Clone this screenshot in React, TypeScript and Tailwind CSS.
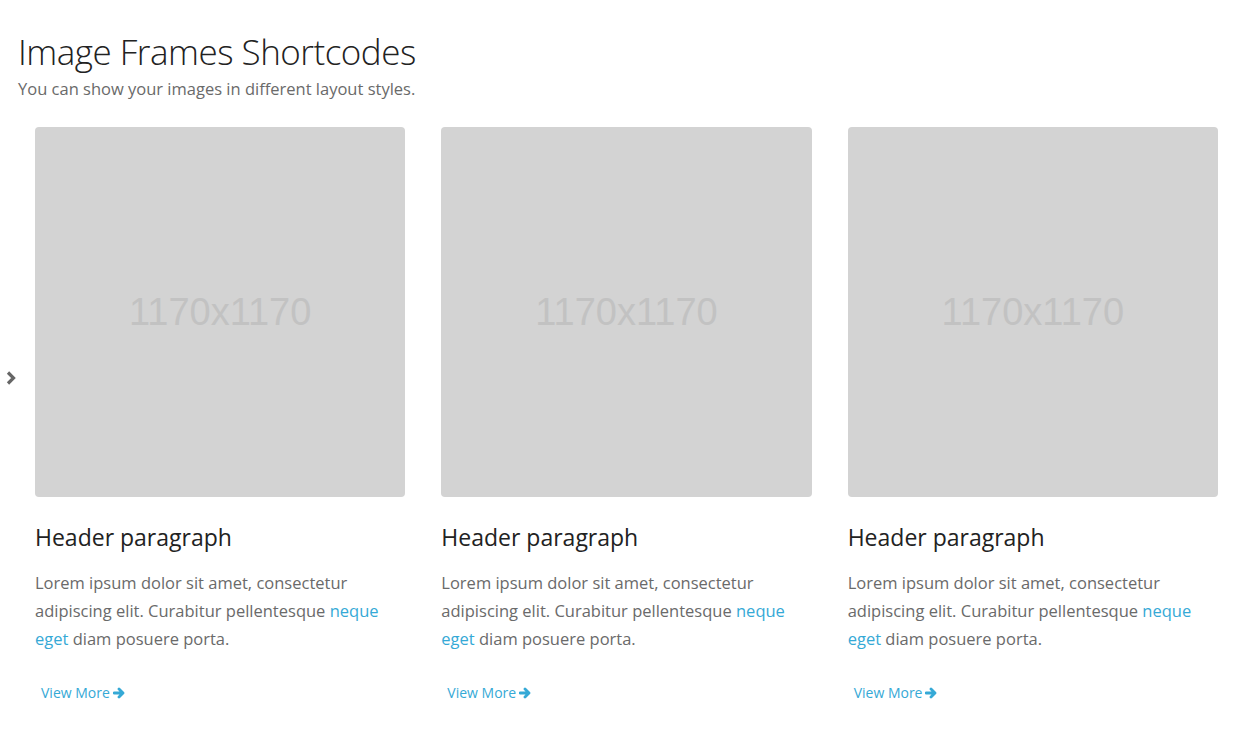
import React from 'react';

const cards = [1, 2, 3];

// chunky arrow like the old icon font one
const ArrowRight: React.FC = () => (
  <svg viewBox="0 0 12 12" className="w-[12px] h-[12px] inline-block">
    <path d="M1 6 H9.5 M6 2 L10 6 L6 10" stroke="currentColor" strokeWidth="2.8" strokeLinecap="round" strokeLinejoin="round" fill="none" />
  </svg>
);

const Card: React.FC = () => (
  <div className="flex flex-col">
    <div className="h-[370px] rounded-[4px] bg-[#d3d3d3] flex items-center justify-center">
      <span className="text-[38px] text-[#c2c2c2]" style={{ fontFamily: '"Liberation Sans", Arial, sans-serif' }}>
        1170x1170
      </span>
    </div>
    <h3 className="mt-[24px] text-[23px] leading-[32px] text-[#222]">Header paragraph</h3>
    <p className="mt-[16px] text-[16.5px] leading-[28px] text-[#6a6a6a]">
      Lorem ipsum dolor sit amet, consectetur adipiscing elit. Curabitur pellentesque{' '}
      <a className="text-[#35a9d6]">neque eget</a> diam posuere porta.
    </p>
    <a className="mt-[29px] ml-[6px] flex items-center gap-[3px] text-[14px] text-[#35a9d6]">
      View More <ArrowRight />
    </a>
  </div>
);

export default function App() {
  return (
    <div className="min-h-screen bg-white relative" style={{ fontFamily: '"Open Sans", sans-serif' }}>
      <div className="pt-[29px] pl-[18px]">
        <h1 className="text-[35px] leading-[46px] font-light text-[#222] tracking-[-0.5px]">Image Frames Shortcodes</h1>
        <p className="mt-[2px] text-[16.5px] leading-[24px] text-[#6a6a6a]">You can show your images in different layout styles.</p>
      </div>

      <div className="relative mt-[26px]">
        {/* slider nav */}
        <div className="absolute left-[6px] top-[244px] text-[#666]">
          <svg viewBox="0 0 10 14" className="w-[10px] h-[14px]">
            <path d="M2 1.5 L7.5 7 L2 12.5" stroke="currentColor" strokeWidth="3.2" fill="none" />
          </svg>
        </div>
        <div className="ml-[35px] w-[1183px] grid grid-cols-3 gap-[36px]">
          {cards.map(i => (
            <Card key={i} />
          ))}
        </div>
      </div>
    </div>
  );
}
